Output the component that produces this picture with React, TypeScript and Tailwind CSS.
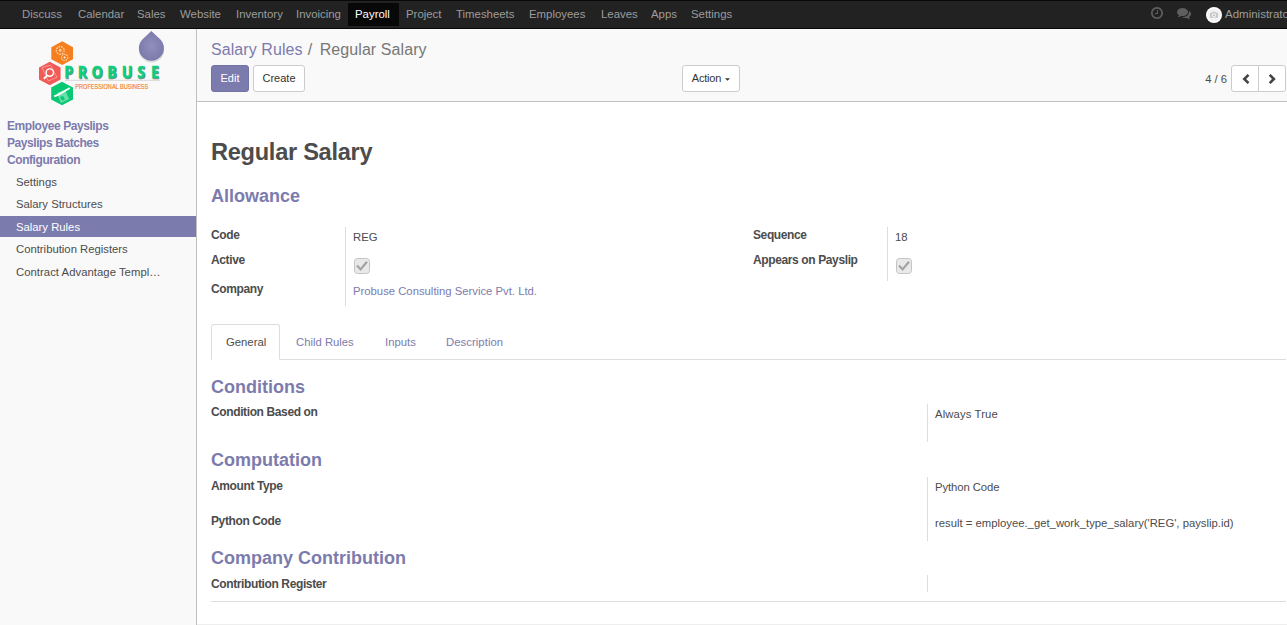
import React from "react";

const navItems = [
  { label: "Discuss", width: "w-14" },
  { label: "Calendar", width: "w-[59px]" },
  { label: "Sales", width: "w-[43px]" },
  { label: "Website", width: "w-14" },
  { label: "Inventory", width: "w-[60px]" },
  { label: "Invoicing", width: "w-[59px]" },
  { label: "Payroll", width: "w-[51px]", active: true },
  { label: "Project", width: "w-[50px]" },
  { label: "Timesheets", width: "w-[73px]" },
  { label: "Employees", width: "w-[72px]" },
  { label: "Leaves", width: "w-[50px]" },
  { label: "Apps", width: "w-10" },
  { label: "Settings", width: "w-[55px]" },
];

function ClockIcon() {
  return (
    <svg viewBox="0 0 1536 1792" className="h-[14px] w-3 fill-current">
      <path d="M896 544v448q0 14-9 23t-23 9h-320q-14 0-23-9t-9-23v-64q0-14 9-23t23-9h224v-352q0-14 9-23t23-9h64q14 0 23 9t9 23zm416 352q0-148-73-273t-198-198-273-73-273 73-198 198-73 273 73 273 198 198 273 73 273-73 198-198 73-273zm224 0q0 209-103 385.5t-279.5 279.5-385.5 103-385.5-103-279.5-279.5-103-385.5 103-385.5 279.5-279.5 385.5-103 385.5 103 279.5 279.5 103 385.5z" />
    </svg>
  );
}

function CommentsIcon() {
  return (
    <svg viewBox="0 0 1792 1792" className="size-[14px] fill-current">
      <path d="M1408 768q0 139-94 257t-256.5 186.5-353.5 68.5q-86 0-176-16-124 88-278 128-36 9-86 16h-3q-11 0-20.5-8t-11.5-21q-1-3-1-6.5t.5-6.5 2-6l2.5-5 3.5-5.5 4-5 4.5-5 4-4.5q5-6 23-25t26-29.5 22.5-29 25-38.5 20.5-44q-124-72-195-177t-71-224q0-139 94-257t256.5-186.5 353.5-68.5 353.5 68.5 256.5 186.5 94 257zm384 256q0 120-71 224.5t-195 176.5q10 24 20.5 44t25 38.5 22.5 29 26 29.5 23 25q1 1 4 4.5t4.5 5 4 5 3.5 5.5l2.5 5 2 6 .5 6.5-1 6.5q-3 14-13 22t-22 7q-50-7-86-16-154-40-278-128-90 16-176 16-271 0-472-132 58 4 88 4 161 0 309-45t264-129q125-92 192-212t67-254q0-77-23-152 129 71 204 178t75 230z" />
    </svg>
  );
}

function Avatar() {
  return (
    <svg viewBox="0 0 16 16" className="size-4">
      <circle cx="8" cy="8" r="8" fill="#fff" />
      <circle cx="8" cy="8" r="6.4" fill="#f1f1f1" />
      <path d="M4 5.8h2l.7-1h2.6l.7 1h2v5H4z" fill="#c8c8c8" />
      <circle cx="8" cy="8.2" r="1.7" fill="none" stroke="#fff" strokeWidth=".8" />
    </svg>
  );
}

function TopBar() {
  return (
    <header className="flex h-[29px] shrink-0 items-center overflow-hidden border-y border-[#080808] bg-[#222] text-[#9d9d9d]">
      <nav className="flex h-[23px] pl-[15px]">
        {navItems.map((item) => (
          <a
            key={item.label}
            className={`${item.width} pl-[7px] text-[11.4px] leading-[23px] whitespace-nowrap ${item.active ? "bg-[#080808] text-white" : ""}`}
          >
            {item.label}
          </a>
        ))}
      </nav>
      <div className="ml-auto flex h-[27px] w-[136px] shrink-0 items-center whitespace-nowrap">
        <span className="-mt-[3px] flex gap-[14px] text-[#5e5e5e]">
          <ClockIcon />
          <CommentsIcon />
        </span>
        <span className="mt-px ml-[15px] shrink-0">
          <Avatar />
        </span>
        <span className="ml-[3px] text-[11.5px] leading-[23px]">Administrator</span>
      </div>
    </header>
  );
}

function Logo() {
  return (
    <svg viewBox="0 0 196 84" className="block h-[84px] w-[196px] shrink-0">
      <defs>
        <radialGradient id="drop">
          <stop offset="0" stopColor="#918fba" />
          <stop offset="1" stopColor="#7c7bad" />
        </radialGradient>
      </defs>
      <path d="M151.5 3.5L160.5 12A12.6 12.6 0 1 1 142.7 12Z" fill="#bbb" opacity=".5" />
      <path d="M151.3 2L160.2 10.3A12.5 12.5 0 1 1 142.6 10.3Z" fill="url(#drop)" />
      <path d="M62.2 12.3 73 18.3V30.3L62.2 36.1 51.3 30.3V18.3Z" fill="#f57f1e" />
      <path d="M49.8 32.7 60.6 38.6V50.4L49.8 56.3 39 50.4V38.6Z" fill="#f15a56" />
      <path d="M62 52.7 73 58.6V70.4L62 76.3 51.2 70.4V58.6Z" fill="#09c873" />
      <g fill="none" stroke="#ffd3a8">
        <circle cx="60.2" cy="21.4" r="3.9" strokeWidth="1.3" strokeDasharray="1.7 1" />
        <circle cx="60.2" cy="21.4" r=".9" stroke="#fff" />
        <circle cx="64.6" cy="28.4" r="3.1" strokeWidth="1.2" strokeDasharray="1.4 .9" />
        <circle cx="64.6" cy="28.4" r=".6" stroke="#fff" />
      </g>
      <path d="m42 38.5 8.5-2.3 6.5 12-8.7 3.8z" fill="none" stroke="#f7a09c" strokeWidth=".9" />
      <circle cx="49.8" cy="43.6" r="3.7" fill="none" stroke="#fff" strokeWidth="1.4" />
      <path d="m47.2 46.6-3.4 3.2" stroke="#fff" strokeWidth="1.9" />
      <path d="m57 64 8-3 4.2 9-8.4 4z" fill="#68dfab" />
      <path d="m54.2 67.4 3.8-1.6 11.8-6.8" fill="none" stroke="#fff" strokeWidth="1.9" />
      <path d="m60 68 3-1.1 2 3.4-3 1.4z" fill="#09c873" />
      <path d="M65 51.3h95" stroke="#d8d8d8" />
      <g fontFamily="Open Sans, sans-serif" fontWeight="700" fontSize="16.3" strokeWidth=".5">
        <g transform="scale(.87 1)">
          <text x="74.8 90.3 106 124 140.8 158.6 174.3" y="49.6" fill="#7d8f87" stroke="#7d8f87">PROBUSE</text>
          <text x="74 89.5 105.2 123.2 140 157.8 173.5" y="48.6" fill="#0bd07c" stroke="#0bd07c">PROBUSE</text>
        </g>
      </g>
      <text x="75.3" y="60.1" fontFamily="Liberation Sans, sans-serif" fontSize="6.8" textLength="73" lengthAdjust="spacingAndGlyphs" fill="#f58220" stroke="#f58220" strokeWidth=".15">
        PROFESSIONAL BUSINESS
      </text>
    </svg>
  );
}

const subItems = [
  { label: "Settings", box: "h-[22px] leading-[22px]" },
  { label: "Salary Structures", box: "h-[23px] leading-[23px]" },
  { label: "Salary Rules", box: "h-[21px] leading-[23px] bg-[#7c7bad] text-white" },
  { label: "Contribution Registers", box: "mt-px h-[22px] leading-[23px]" },
  { label: "Contract Advantage Templates", box: "h-[24px] leading-[25px] tracking-[0.04px]" },
];

function Sidebar() {
  return (
    <aside className="flex w-[197px] shrink-0 flex-col border-r border-[#c0c0c0] bg-[#f9f9f9]">
      <Logo />
      <div className="mt-[5px] pl-[7px] text-[12px] leading-[17px] font-bold tracking-[-0.43px] text-[#7c7bad]">
        <div>Employee Payslips</div>
        <div>Payslips Batches</div>
        <div>Configuration</div>
      </div>
      <ul className="mt-[2px] text-[11.3px]">
        {subItems.map((item) => (
          <li key={item.label} className={`${item.box} truncate pr-[34px] pl-4`}>
            {item.label}
          </li>
        ))}
      </ul>
    </aside>
  );
}

const button = "flex h-[27px] items-center justify-center rounded-[3px] border text-[11px] leading-none";

function ControlPanel() {
  return (
    <div className="h-[73px] shrink-0 border-b border-[#c0c0c0] bg-[#f9f9f9] pl-[14px]">
      <div className="flex h-9 pt-[10px] text-[16px] leading-[22px] whitespace-pre text-[#777]">
        <span className="tracking-[0.08px] text-[#7c7bad]">Salary Rules</span>
        <span className="w-[17px] pl-[5px]">/</span>
        <span className="tracking-[0.08px]">Regular Salary</span>
      </div>
      <div className="flex">
        <div className="flex w-[471px] gap-1">
          <button className={`${button} w-[38px] border-[#7473a6] bg-[#7c7bad] text-white`}>Edit</button>
          <button className={`${button} w-[52px] border-[#ccc] bg-white text-[#333]`}>Create</button>
        </div>
        <button className={`${button} w-[58px] gap-1 border-[#ccc] bg-white tracking-[-0.2px] text-[#333]`}>
          Action
          <svg viewBox="0 0 6 3" className="mt-0.5 h-[3px] w-[5px]">
            <path d="M0 0h6L3 3z" fill="#333" />
          </svg>
        </button>
        <div className="ml-auto flex items-center">
          <span className="mt-px mr-1 text-[11.2px]">4 / 6</span>
          <button className="flex h-[27px] w-7 items-center justify-center rounded-l-[3px] border border-[#ccc] bg-white pl-px">
            <svg viewBox="0 0 8 10" className="h-2.5 w-2 fill-none stroke-[#444] stroke-[2.6]">
              <path d="M6.5.9 2.3 5l4.2 4.1" />
            </svg>
          </button>
          <button className="-ml-px flex h-[27px] w-7 items-center justify-center rounded-r-[3px] border border-[#ccc] bg-white">
            <svg viewBox="0 0 8 10" className="h-2.5 w-2 fill-none stroke-[#444] stroke-[2.6]">
              <path d="m1.7.9 4.2 4.1-4.2 4.1" />
            </svg>
          </button>
          <span className="w-px" />
        </div>
      </div>
    </div>
  );
}

function CheckedBox() {
  return (
    <svg viewBox="0 0 16 16" className="ml-px block size-4">
      <rect x=".5" y=".5" width="15" height="15" rx="3" fill="#e9e9e9" stroke="#c4c4c4" />
      <path d="m3 7.6 3.6 3.8 6.4-7.6" fill="none" stroke="#a3a3a3" strokeWidth="2.2" />
    </svg>
  );
}

const label = "font-bold text-[12px] tracking-[-0.38px] whitespace-nowrap";
const heading = "text-[18px] leading-5 font-bold text-[#7c7bad]";

function Sheet() {
  return (
    <section className="min-h-0 flex-1 border-b border-[#eee] bg-white pt-[34px] pr-px pl-[14px]">
      <h1 className="text-[23.6px] leading-8 font-bold tracking-[-0.28px]">Regular Salary</h1>
      <h2 className={`${heading} mt-[18px]`}>Allowance</h2>

      <div className="mt-[21px] flex h-[79px] items-start">
        <div className={`${label} w-[134px]`}>
          <div className="h-[21px] leading-4">Code</div>
          <div className="mt-1 h-[25px] leading-4">Active</div>
          <div className="mt-1 leading-4">Company</div>
        </div>
        <div className="h-[79px] w-[408px] border-l border-[#ddd] pl-[7px] text-[11.3px]">
          <div className="h-[31px] leading-5">REG</div>
          <CheckedBox />
          <div className="mt-[7px] leading-5 text-[#7c7bad]">Probuse Consulting Service Pvt. Ltd.</div>
        </div>
        <div className={`${label} w-[134px]`}>
          <div className="h-[21px] leading-4">Sequence</div>
          <div className="mt-1 leading-4">Appears on Payslip</div>
        </div>
        <div className="h-[54px] border-l border-[#ddd] pl-[7px] text-[11.3px]">
          <div className="h-[31px] leading-5">18</div>
          <CheckedBox />
        </div>
      </div>

      <div className="mt-[18px] flex h-9 border-b border-[#ddd] text-[11.3px] leading-9 text-[#7c7bad]">
        <div className="h-9 w-[69px] rounded-t-[3px] border border-[#ddd] border-b-white bg-white pl-[14px] leading-[34px] text-[#4c4c4c]">General</div>
        <div className="w-[89px] pl-4">Child Rules</div>
        <div className="w-[61px] pl-4">Inputs</div>
        <div className="pl-4 tracking-[0.06px]">Description</div>
      </div>

      <h2 className={`${heading} mt-[17px]`}>Conditions</h2>
      <div className="mt-[7px] flex h-[38px]">
        <div className={`${label} w-[716px] leading-4`}>Condition Based on</div>
        <div className="border-l border-[#ddd] pl-[7px] text-[11.3px] leading-5 tracking-[0.12px]">Always True</div>
      </div>

      <h2 className={`${heading} mt-2`}>Computation</h2>
      <div className="mt-[7px] flex h-16">
        <div className={`${label} w-[716px] leading-[18px]`}>
          <div className="h-[35px]">Amount Type</div>
          <div>Python Code</div>
        </div>
        <div className="border-l border-[#ddd] pl-[7px] text-[11.3px] leading-5">
          <div className="h-9 tracking-[-0.08px]">Python Code</div>
          <div>result = employee._get_work_type_salary('REG', payslip.id)</div>
        </div>
      </div>

      <h2 className={`${heading} mt-[7px]`}>Company Contribution</h2>
      <div className="mt-[7px] flex h-[27px] border-b border-[#ddd]">
        <div className={`${label} w-[716px] leading-[18px]`}>Contribution Register</div>
        <div className="h-[17px] border-l border-[#ddd]" />
      </div>
    </section>
  );
}

export default function App() {
  return (
    <div className="flex h-[625px] w-[1287px] flex-col overflow-hidden bg-white font-['Liberation_Sans',Arial,sans-serif] text-[#4c4c4c]">
      <TopBar />
      <div className="flex min-h-0 flex-1">
        <Sidebar />
        <main className="flex min-w-0 flex-1 flex-col">
          <ControlPanel />
          <Sheet />
        </main>
      </div>
    </div>
  );
}
